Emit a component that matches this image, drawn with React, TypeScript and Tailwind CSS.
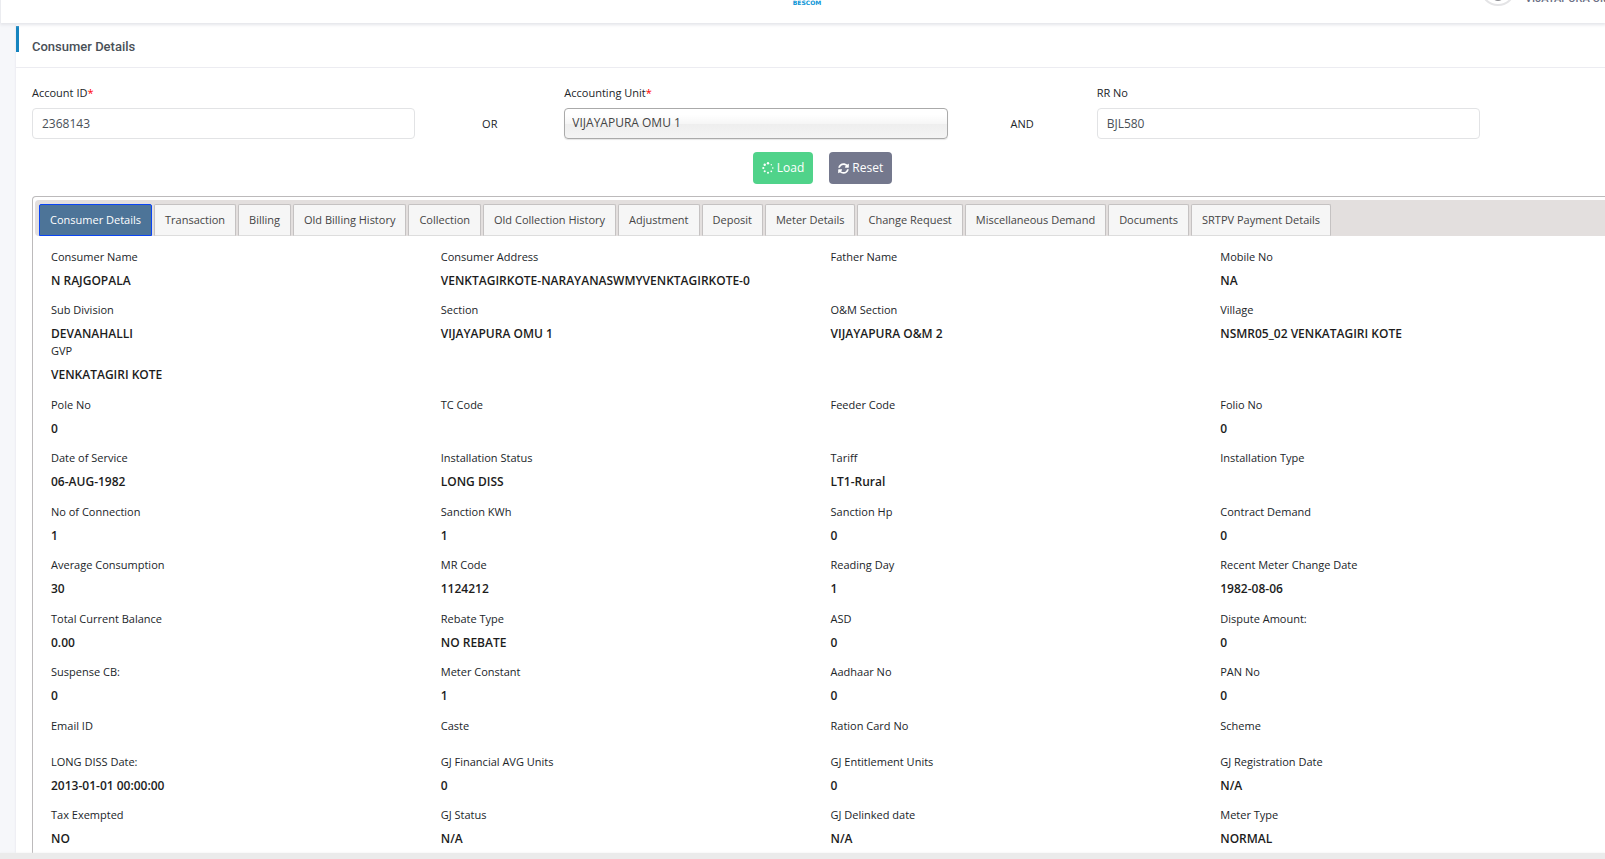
import { useState } from 'react';
import { FaSyncAlt } from 'react-icons/fa';
import clsx from 'clsx';

const TABS = [
  'Consumer Details',
  'Transaction',
  'Billing',
  'Old Billing History',
  'Collection',
  'Old Collection History',
  'Adjustment',
  'Deposit',
  'Meter Details',
  'Change Request',
  'Miscellaneous Demand',
  'Documents',
  'SRTPV Payment Details',
];

type Field = [label: string, value?: string];
type Row = { fields: Field[]; size?: 'normal' | 'tight' | 'short' | 'last' };

const ROWS: Row[] = [
  {
    size: 'normal',
    fields: [
      ['Consumer Name', 'N RAJGOPALA'],
      ['Consumer Address', 'VENKTAGIRKOTE-NARAYANASWMYVENKTAGIRKOTE-0'],
      ['Father Name'],
      ['Mobile No', 'NA'],
    ],
  },
  {
    size: 'tight',
    fields: [
      ['Sub Division', 'DEVANAHALLI'],
      ['Section', 'VIJAYAPURA OMU 1'],
      ['O&M Section', 'VIJAYAPURA O&M 2'],
      ['Village', 'NSMR05_02 VENKATAGIRI KOTE'],
    ],
  },
  { fields: [['GVP', 'VENKATAGIRI KOTE']] },
  { fields: [['Pole No', '0'], ['TC Code'], ['Feeder Code'], ['Folio No', '0']] },
  {
    fields: [
      ['Date of Service', '06-AUG-1982'],
      ['Installation Status', 'LONG DISS'],
      ['Tariff', 'LT1-Rural'],
      ['Installation Type'],
    ],
  },
  { fields: [['No of Connection', '1'], ['Sanction KWh', '1'], ['Sanction Hp', '0'], ['Contract Demand', '0']] },
  {
    fields: [
      ['Average Consumption', '30'],
      ['MR Code', '1124212'],
      ['Reading Day', '1'],
      ['Recent Meter Change Date', '1982-08-06'],
    ],
  },
  { fields: [['Total Current Balance', '0.00'], ['Rebate Type', 'NO REBATE'], ['ASD', '0'], ['Dispute Amount:', '0']] },
  { fields: [['Suspense CB:', '0'], ['Meter Constant', '1'], ['Aadhaar No', '0'], ['PAN No', '0']] },
  { size: 'short', fields: [['Email ID'], ['Caste'], ['Ration Card No'], ['Scheme']] },
  {
    size: 'normal',
    fields: [
      ['LONG DISS Date:', '2013-01-01 00:00:00'],
      ['GJ Financial AVG Units', '0'],
      ['GJ Entitlement Units', '0'],
      ['GJ Registration Date', 'N/A'],
    ],
  },
  {
    size: 'last',
    fields: [['Tax Exempted', 'NO'], ['GJ Status', 'N/A'], ['GJ Delinked date', 'N/A'], ['Meter Type', 'NORMAL']],
  },
];

const Header = () => (
  <header className="z-10 ml-px grid h-[70px] -mt-[47px] shrink-0 grid-cols-[1fr_auto_1fr] bg-white pl-2 shadow-[0_1px_3px_1px_#e4e5ea]">
    <div />
    <div className="flex flex-col items-center justify-end pb-4">
      <span className="font-['DejaVu_Sans',sans-serif] text-[6px] leading-[8px] font-bold text-[#0a94d6]">BESCOM</span>
    </div>
    <div className="-mr-12 flex items-center justify-end gap-[9px] whitespace-nowrap">
      <svg viewBox="0 0 36 36" className="size-9 shrink-0">
        <circle cx="18" cy="18" r="17" fill="#fff" stroke="#e4e4e6" strokeWidth="2" />
        <ellipse cx="18" cy="23" rx="7" ry="8" fill="#8b8b90" />
      </svg>
      <span className="w-[128px] pt-[22px] font-[Roboto,sans-serif] text-[11px] leading-4 font-medium text-[#6c7086]">
        VIJAYAPURA OMU 1
      </span>
    </div>
  </header>
);

const SpinnerIcon = () => (
  <svg viewBox="0 0 12 12" className="size-3" fill="currentColor">
    <circle cx="6" cy="1.3" r="1.2" />
    <circle cx="9.3" cy="2.7" r="0.7" />
    <circle cx="10.8" cy="6" r="0.8" />
    <circle cx="9.3" cy="9.3" r="0.9" />
    <circle cx="6" cy="10.7" r="1" />
    <circle cx="2.7" cy="9.3" r="1.05" />
    <circle cx="1.3" cy="6" r="1.1" />
    <circle cx="2.7" cy="2.7" r="1.2" />
  </svg>
);

const SearchForm = () => {
  const [accountId, setAccountId] = useState('2368143');
  const [unit, setUnit] = useState('VIJAYAPURA OMU 1');
  const [rrNo, setRrNo] = useState('BJL580');

  const inputClass =
    'h-[31px] w-full rounded border border-[#e2e3e5] bg-white px-[9px] text-[12px] text-[#495057] outline-none';

  return (
    <form className="-mr-4 ml-2" onSubmit={(e) => e.preventDefault()}>
      <div className="grid grid-cols-12">
        <div className="col-span-3 px-2">
          <label htmlFor="account-id" className="mb-1.5 block leading-[18px]">
            Account ID<span className="text-[#f00]">*</span>
          </label>
          <input id="account-id" className={inputClass} value={accountId} onChange={(e) => setAccountId(e.target.value)} />
        </div>
        <div className="pt-[31px] text-center leading-[18px]">OR</div>
        <div className="col-span-3 px-2">
          <label htmlFor="accounting-unit" className="mb-1.5 block leading-[18px]">
            Accounting Unit<span className="text-[#f00]">*</span>
          </label>
          <select
            id="accounting-unit"
            value={unit}
            onChange={(e) => setUnit(e.target.value)}
            className="block h-[31px] w-full appearance-none rounded border border-[#aaa] bg-[linear-gradient(#fff_20%,#f6f6f6_50%,#eee_52%,#f4f4f4_100%)] px-[7px] pb-[2px] text-[12px] text-[#444] shadow-[0_1px_1px_rgba(0,0,0,0.1)] outline-none"
          >
            <option>VIJAYAPURA OMU 1</option>
          </select>
        </div>
        <div className="pt-[31px] text-center leading-[18px]">AND</div>
        <div className="col-span-3 px-2">
          <label htmlFor="rr-no" className="mb-1.5 block leading-[18px]">
            RR No
          </label>
          <input id="rr-no" className={inputClass} value={rrNo} onChange={(e) => setRrNo(e.target.value)} />
        </div>
      </div>
      <div className="mt-[13px] flex justify-center gap-4 text-[12px] text-white">
        <button type="submit" className="flex h-8 items-center gap-[3px] rounded bg-[#50d38a] px-[9px]">
          <SpinnerIcon />
          Load
        </button>
        <button type="button" className="flex h-8 items-center gap-[3px] rounded bg-[#74788d] px-[9px]">
          <FaSyncAlt className="size-[11px]" />
          Reset
        </button>
      </div>
    </form>
  );
};

const DetailRow = ({ row }: { row: Row }) => (
  <div
    className={clsx(
      'grid grid-cols-4',
      row.size === 'normal' && 'h-[53px]',
      row.size === 'tight' && 'h-[41px]',
      row.size === 'short' && 'h-9',
      row.size === 'last' && 'h-[47px]',
      !row.size && 'odd:h-[54px] even:h-[53px]',
    )}
  >
    {row.fields.map(([label, value]) => (
      <dl key={label} className="whitespace-nowrap">
        <dt className="leading-[18px] text-[#212529]">{label}</dt>
        <dd className="mt-1.5 text-[12px] leading-[18px] font-semibold text-[#1c1c1c]">{value}</dd>
      </dl>
    ))}
  </div>
);

const App = () => {
  const [activeTab, setActiveTab] = useState(TABS[0]);

  return (
    <div className="flex min-h-screen flex-col overflow-hidden bg-[#f6f7fa] font-['Open_Sans','Noto_Sans',sans-serif] text-[11px] text-[#212529]">
      <Header />
      <main className="ml-4 flex-1 bg-white pt-[3px] shadow-[0_0_2px_#dfe1e8]">
        <div className="flex h-[42px] items-start border-b border-[#ececf1]">
          <div className="h-[26px] w-[3px] bg-[#1584bf]" />
          <h1 className="ml-[13px] self-center font-[Roboto,sans-serif] text-[13px] leading-5 font-medium text-[#495057]">
            Consumer Details
          </h1>
        </div>
        <div className="pt-4">
          <SearchForm />
          <section className="mt-3 -mr-2 ml-4 rounded-tl border border-b-0 border-[#bcbabb] pt-[3px] pl-[2px]">
            <div role="tablist" className="flex gap-[2px] overflow-hidden rounded-l bg-[#e3dfde] pt-1 pl-1">
              {TABS.map((tab) => (
                <button
                  key={tab}
                  type="button"
                  role="tab"
                  aria-selected={tab === activeTab}
                  onClick={() => setActiveTab(tab)}
                  className={clsx(
                    'h-8 rounded-t-[2px] border px-[10px] whitespace-nowrap',
                    tab === activeTab
                      ? 'border-[#0a45f5] bg-[#4d7498] text-white'
                      : 'border-[#c5c2c2] border-b-[#ddd] bg-[#f6f6f6] text-[#454545]',
                  )}
                >
                  {tab}
                </button>
              ))}
            </div>
            <div className="mr-[2px] pt-3 pl-4">
              {ROWS.map((row) => (
                <DetailRow key={row.fields[0][0]} row={row} />
              ))}
            </div>
          </section>
        </div>
      </main>
      <div className="z-10 h-[7px] shrink-0 bg-[#ebebeb] shadow-[0_0_2px_#ebebeb]" />
    </div>
  );
};

export default App;
